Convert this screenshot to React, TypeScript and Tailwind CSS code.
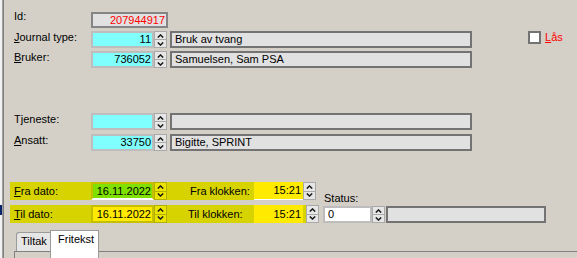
import React from 'react';

function Chev({ up }: { up?: boolean }) {
  return (
    <svg width="7" height="4" viewBox="0 0 7 4" className="block">
      <polyline
        points={up ? '0.8,3.6 3.5,0.9 6.2,3.6' : '0.8,0.4 3.5,3.1 6.2,0.4'}
        fill="none"
        stroke="#1a1a1a"
        strokeWidth="1.4"
      />
    </svg>
  );
}

function Spin({ yellow }: { yellow?: boolean }) {
  return (
    <div
      className={`w-[13px] h-full flex flex-col gap-px border ${
        yellow ? 'border-[#b4b000] bg-[#b4b000]' : 'border-[#a9a9a9] bg-[#a9a9a9]'
      }`}
    >
      <div className={`flex-1 flex items-center justify-center ${yellow ? 'bg-[#ebe400]' : 'bg-[#e6e6e6]'}`}>
        <Chev up />
      </div>
      <div className={`flex-1 flex items-center justify-center ${yellow ? 'bg-[#ebe400]' : 'bg-[#e6e6e6]'}`}>
        <Chev />
      </div>
    </div>
  );
}

function Label({ children }: { children: React.ReactNode }) {
  return <div className="w-[77px] leading-[13px] text-black">{children}</div>;
}

// lookup row: cyan number field + spinner + grey description box
function LookupRow({ label, value, text }: { label: React.ReactNode; value: string; text: string }) {
  return (
    <div className="flex h-[17px] items-start">
      <Label>{label}</Label>
      <div className="w-[63px] h-full bg-[#80ffff] border-2 border-[#bdbdbd] text-right pr-[1px] leading-[13px]">
        {value}
      </div>
      <Spin />
      <div className="ml-[3px] w-[302px] h-full bg-[#e1e1e1] border-2 border-[#737373] pl-[3px] leading-[13px]">
        {text}
      </div>
    </div>
  );
}

export default function App() {
  return (
    <div className="w-[577px] h-[258px] bg-[#d4d0c8] flex overflow-hidden font-['Liberation_Sans',Arial,sans-serif] text-[11px] text-black">
      {/* left frame edge */}
      <div className="w-[2px] h-full bg-[#f2f2f2] flex flex-col">
        <div className="mt-[205px] h-[10px] bg-[#0a246a]" />
      </div>
      <div className="w-[1px] h-full bg-[#a0a0a0]" />
      <div className="w-[1px] h-full bg-[#808080]" />

      <div className="flex-1 flex flex-col pl-[10px]">
        {/* Id */}
        <div className="mt-[12px] flex h-[16px] items-start">
          <div className="w-[77px] -mt-[2px] leading-[13px]">Id:</div>
          <div className="w-[77px] h-full bg-[#e1e1e1] border-2 border-[#858585] text-right pr-[1px] leading-[12px] text-[#ff0000]">
            207944917
          </div>
        </div>

        <div className="mt-[3px] flex items-start">
          <LookupRow label={<><u>J</u>ournal type:</>} value="11" text="Bruk av tvang" />
          <div className="ml-[56px] w-[13px] h-[13px] bg-white border-2 border-[#737373]" />
          <div className="ml-[4px] leading-[13px] text-[#ff0000]">
            <u>L</u>ås
          </div>
        </div>

        <div className="mt-[3px]">
          <LookupRow label={<><u>B</u>ruker:</>} value="736052" text="Samuelsen, Sam PSA" />
        </div>

        <div className="mt-[45px]">
          <LookupRow label="Tjeneste:" value="" text="" />
        </div>

        <div className="mt-[4px]">
          <LookupRow label={<><u>A</u>nsatt:</>} value="33750" text="Bigitte, SPRINT" />
        </div>

        {/* date / time block */}
        <div className="mt-[31px] flex items-end -ml-[4px]">
          <div className="flex flex-col gap-[5px]">
            <div className="flex h-[18px]">
              <div className="w-[293px] h-full bg-[#d6d300] flex items-center">
                <div className="w-[81px] pl-[4px]">
                  <u>F</u>ra dato:
                </div>
                <div className="w-[63px] h-full bg-[#80e000] border-2 border-[#c4c000] border-b-white text-right pr-[1px] leading-[14px]">
                  16.11.2022
                </div>
                <Spin yellow />
                <div className="ml-[23px] w-[64px]">Fra klokken:</div>
                <div className="w-[49px] h-full bg-[#ffea00] border-b border-white text-right pr-[2px] leading-[17px]">
                  15:21
                </div>
              </div>
              <Spin />
            </div>
            <div className="flex h-[18px]">
              <div className="w-[293px] h-full bg-[#d6d300] flex items-center">
                <div className="w-[81px] pl-[4px]">
                  <u>T</u>il dato:
                </div>
                <div className="w-[63px] h-full bg-[#ffea00] border-2 border-[#c4c000] text-right pr-[1px] leading-[14px]">
                  16.11.2022
                </div>
                <Spin yellow />
                <div className="ml-[21px] w-[66px]">Til klokken:</div>
                <div className="w-[49px] h-full bg-[#ffea00] text-right pr-[2px] leading-[18px]">
                  15:21
                </div>
              </div>
              <div className="w-[3px] h-full bg-[#d6d300]" />
              <Spin />
            </div>
          </div>

          <div className="ml-[4px] flex flex-col">
            <div className="pl-[1px] leading-[13px] mb-[1px]">Status:</div>
            <div className="flex h-[17px]">
              <div className="w-[49px] h-full bg-white border-2 border-[#bdbdbd] pl-[3px] leading-[13px]">0</div>
              <Spin />
              <div className="ml-[1px] w-[160px] h-full bg-[#e1e1e1] border-2 border-[#737373]" />
            </div>
          </div>
        </div>

        {/* tabs */}
        <div className="mt-[7px] flex h-[21px] items-end">
          <div className="ml-[2px] w-[34px] h-[19px] bg-[#e6e6e6] border-t border-l border-[#9a9a9a] rounded-tl-[3px] pl-[4px] leading-[17px]">
            Tiltak
          </div>
          <div className="self-start relative z-10 w-[49px] h-[28px] bg-white border-t border-l border-r border-[#9a9a9a] pl-[7px] pt-[2px] leading-[13px]">
            Fritekst
          </div>
        </div>
        <div className="flex-1 border-t border-l border-[#808080]" />
      </div>
    </div>
  );
}
